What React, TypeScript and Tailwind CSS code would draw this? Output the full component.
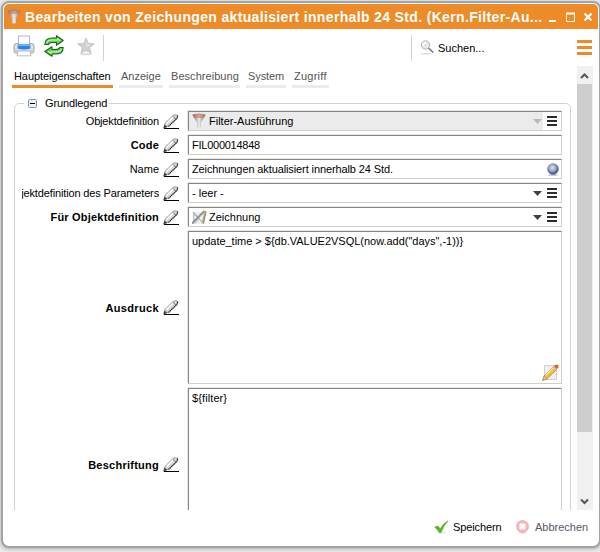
import type { ReactNode } from "react";

const Funnel = ({ className = "" }: { className?: string }) => (
  <svg width="14" height="16" viewBox="0 0 14 16" className={`shrink-0 ${className}`}>
    <defs>
      <linearGradient id="fn">
        <stop offset="0" stopColor="#666" />
        <stop offset=".5" stopColor="#ecece9" />
        <stop offset="1" stopColor="#6c6c6c" />
      </linearGradient>
    </defs>
    <path d="M.5 2L5 9.500V14q2 1 4 0V9.500L13.500 2z" fill="url(#fn)" />
    <path d="M.5 1.500h13L12.300 4.500Q7 5.500 1.700 4.500z" fill="#c9775a" fillOpacity=".6" />
    <path d="M.8 1.800Q7 .2 13.200 1.800" fill="none" stroke="#a48478" strokeWidth="1" />
  </svg>
);

const Pencil = () => (
  <svg width="16" height="16" viewBox="0 0 16 16" className="shrink-0">
    <path d="M1 14.500H16" stroke="#000" />
    <path d="M.8 13.500L2.200 9L10 1.500Q12 0 14.200 1Q15 2.500 13.500 4.500L5.500 12z" fill="#d8d8d8" stroke="#888" strokeWidth=".7" />
    <path d="M14.500 1.500Q14.800 3.500 13.500 5L5.500 12.500" fill="none" stroke="#111" strokeWidth="1.100" strokeDasharray="1.400 .5" />
    <path d="M10 2.500l3.500 3" stroke="#777" strokeWidth="1" />
    <path d="M3.500 9.800l6.500-6.500" stroke="#fff" strokeWidth="1.300" />
    <path d="M.3 14.500l1.200-4 3 2.500z" fill="#444" />
  </svg>
);

const Printer = () => (
  <svg width="22" height="22" viewBox="0 0 22 22" className="shrink-0">
    <path d="M5.500 10V1h11v9z" fill="#fafbfe" stroke="#b4b6c6" />
    <path d="M1 11Q1 8.500 3.500 8.500H5V11h12V8.500h1.500Q21 8.500 21 11v5.500Q21 18 19.500 18h-17Q1 18 1 16.500z" fill="#dfe1ea" stroke="#8b8da0" strokeWidth=".8" />
    <path d="M5.300 9.500h11.400l1 4Q11 15.500 4.300 13.500z" fill="#2b84e0" />
    <path d="M5.300 9.500h11.400l.4 1.500H4.900z" fill="#65b6f6" />
    <path d="M1.500 14.500q9.500 2 19 0V17q0 1-1 1h-17q-1 0-1-1z" fill="#c8cad6" />
    <path d="M5 16h12l1 4.800H4z" fill="#fff" stroke="#a9abb9" strokeWidth=".8" />
  </svg>
);

const Refresh = () => (
  <svg width="20" height="22" viewBox="0 0 20 22" className="shrink-0">
    <g fill="#63d654" stroke="#17601d" strokeWidth="1.100" strokeLinejoin="round">
      <path d="M.8 9.500Q1 3 8 3h4.500V.8L19.200 5.500 12.500 10.200V7.500H8.500Q5 7.500 4.200 9.500z" />
      <path d="M19.200 12.500Q19 19 12 19H8v2.200L.8 16.500 8 11.800v2.700h3.500q3.500 0 4.300-2z" />
    </g>
    <path d="M2.800 7.800Q3.800 5 8 5h5.500V3.800L16.500 5.700M17.200 14.200Q16.200 17 12 17H7v1.200L4 16.300" stroke="#bff7ae" strokeWidth="1.100" fill="none" />
  </svg>
);

const Star = () => (
  <svg width="18" height="19" viewBox="0 0 18 19" className="shrink-0">
    <ellipse cx="9" cy="17.300" rx="6" ry="1" fill="#ddd" />
    <path d="M9 1l2.300 5.400 6 .4-4.600 3.900 1.500 5.900L9 13.500l-5.200 3.100 1.500-5.900L.7 6.800l6-.4z" fill="#d0d0d0" stroke="#bababa" strokeWidth=".7" />
    <path d="M9 3l1.500 4 4 .5-3.500 2.700L9 9z" fill="#dedede" />
  </svg>
);

const Magnifier = () => (
  <svg width="14" height="15" viewBox="0 0 14 15" className="shrink-0">
    <ellipse cx="6.500" cy="13.700" rx="6" ry=".7" fill="#d8d8d8" />
    <path d="M8.500 8l4.800 4.500" stroke="#777" strokeWidth="1.600" />
    <circle cx="5.500" cy="5" r="4.200" fill="#e4e6e7" stroke="#b3b3b3" />
    <path d="M3 5.500Q3 3 6 2.500" stroke="#fff" strokeWidth="1.300" fill="none" />
  </svg>
);

const Drawing = () => (
  <svg width="15" height="15" viewBox="0 0 15 15" className="shrink-0">
    <path d="M.5 2h13v12H.5z" fill="#eceef0" />
    <path d="M1 1.500l7 7-5 5H1z" fill="#c4c8cb" />
    <path d="M1 2l10 11" stroke="#8e9296" strokeWidth=".8" />
    <path d="M2.500 5.500v4l2-2z" fill="#fff" />
    <path d="M0 13.500L12.500 1" stroke="#8f969c" strokeWidth="2" />
    <path d="M13.300 1L10.500 13.500" stroke="#d0a566" strokeWidth="1.600" />
    <path d="M14.300 1L11.500 13.500" stroke="#555a68" strokeWidth=".6" />
  </svg>
);

const Globe = () => (
  <svg width="12" height="13" viewBox="0 0 12 13" className="shrink-0">
    <defs>
      <radialGradient id="gl" cx=".45" cy=".4">
        <stop offset="0" stopColor="#dbe3f2" />
        <stop offset=".6" stopColor="#96a6c8" />
        <stop offset="1" stopColor="#4b5d8b" />
      </radialGradient>
    </defs>
    <ellipse cx="6" cy="11.900" rx="5" ry="1" fill="#ccc" />
    <circle cx="6" cy="6" r="5.700" fill="url(#gl)" />
  </svg>
);

const EditNote = () => (
  <svg width="17" height="17" viewBox="0 0 17 17" className="shrink-0">
    <path d="M2.500 1.500h12v14h-12z" fill="#eff0f1" stroke="#cfd1d3" />
    <path d="M.8 16.300l1.400-4.300L12 2.200l2.800 2.800L5 14.800z" fill="#f3c13e" stroke="#a9762a" strokeWidth=".8" />
    <path d="M3.500 11.500l8-8" stroke="#ffe48b" strokeWidth="1.200" />
    <path d="M.6 16.400l1.600-4.400 2.800 2.800z" fill="#ead0a2" stroke="#987148" strokeWidth=".5" />
    <path d="M11 3.200l2.800 2.800 1-1L12 2.200z" fill="#c9c9cc" />
    <path d="M12 2.200L13.500.7h2q1 0 1 1v1.800L14.800 5z" fill="#e5602b" />
  </svg>
);

const Lines = () => (
  <svg width="10" height="10" className="shrink-0">
    <path d="M0 1h10M0 5h10M0 9h10" stroke="#2b2b30" strokeWidth="2" />
  </svg>
);

const Arrow = ({ color }: { color: string }) => (
  <svg width="9" height="5" className="shrink-0">
    <path d="M0 0h9L4.500 5z" fill={color} />
  </svg>
);

function Label({ children, className = "" }: { children: ReactNode; className?: string }) {
  return (
    <div className="flex h-5 w-[165px] shrink-0 items-center">
      <div className="-ml-px flex h-4 w-[137px] items-center justify-end overflow-hidden whitespace-nowrap">
        <span className={className}>{children}</span>
      </div>
      <div className="ml-1 pt-px"><Pencil /></div>
    </div>
  );
}

const box = "w-[374px] border border-t-[#858585] border-l-[#858585] border-r-[#d2cec8] border-b-[#d2cec8] shadow-[-1px_-1px_0_#e6e6e6]";

function Row({ label, bold, tracking = "", children, menu, disabled }: {
  label: string; bold?: boolean; tracking?: string; children: ReactNode; menu?: boolean; disabled?: boolean;
}) {
  return (
    <div className="flex h-5">
      <Label className={`${bold ? "font-bold" : ""} ${tracking}`}>{label}</Label>
      <div className={`${box} flex items-center whitespace-nowrap`}>
        <div className={`flex h-full grow items-center pl-[3px] ${disabled ? "bg-[#ebebeb]" : ""}`}>
          {children}
          {menu && <div className="mr-px ml-auto"><Arrow color={disabled ? "#b9b9b9" : "#404040"} /></div>}
        </div>
        {menu && <div className="flex w-[18px] items-center pl-1"><Lines /></div>}
      </div>
    </div>
  );
}

const tabs = [
  { name: "Haupteigenschaften", cls: "w-[101px] border-[#ec8b27] text-black tracking-[-0.07px]" },
  { name: "Anzeige", cls: "w-11 border-[#ebebeb] text-[#555]" },
  { name: "Beschreibung", cls: "w-[71px] border-[#ebebeb] text-[#555] tracking-[0.05px]" },
  { name: "System", cls: "w-10 border-[#ebebeb] text-[#555] tracking-[-0.1px]" },
  { name: "Zugriff", cls: "w-[37px] border-[#ebebeb] text-[#555] tracking-[0.25px]" },
];

export default function App() {
  return (
    <div className="h-[552px] w-[600px] overflow-hidden bg-[#ececec] pt-px pl-px font-['Liberation_Sans',Arial,sans-serif] text-[11px] leading-4 text-black">
      <div className="flex h-[547px] w-[600px] flex-col overflow-hidden rounded-[8px] border-2 border-[#a3a3a3] bg-white p-px shadow-[0_1px_4px_#aaa]">
        <div className="flex h-[25px] shrink-0 items-center rounded-t-[5px] bg-[#ec8b27] pl-[3px] text-white">
          <Funnel />
          <span className="ml-1 w-[520px] whitespace-nowrap text-[14px] font-bold tracking-[0.345px]">
            Bearbeiten von Zeichungen aktualisiert innerhalb 24 Std. (Kern.Filter-Au...
          </span>
          <svg width="46" height="12" className="mt-px ml-[3px] shrink-0" fill="none" stroke="#fff">
            <path d="M1 10h7" strokeWidth="2" />
            <path d="M18.500 2v8.500h8V2" />
            <path d="M18 2.500h9" strokeWidth="2" />
            <path d="M36.500 2.500l7 7M43.500 2.500l-7 7" strokeWidth="2.200" />
          </svg>
        </div>

        <div className="flex h-[37px] shrink-0 items-center pl-[9px]">
          <div className="-mt-[3px]"><Printer /></div>
          <div className="-mt-[3px] ml-[9px]"><Refresh /></div>
          <div className="-mt-0.5 ml-[13px]"><Star /></div>
          <div className="ml-2 h-[26px] w-px bg-[#d0d0d0]" />
          <div className="ml-[307px] h-[26px] w-px bg-[#d0d0d0]" />
          <div className="ml-2"><Magnifier /></div>
          <span className="ml-1 w-[139px]">Suchen...</span>
          <svg width="15" height="16" className="shrink-0">
            <path d="M0 1.500h15M0 7.500h15M0 13.500h15" stroke="#ec8b27" strokeWidth="3" />
          </svg>
        </div>

        <div className="flex h-[444px] shrink-0 overflow-hidden">
          <div className="w-[573px] shrink-0 overflow-hidden">
            <div className="flex gap-1.5 pt-[3px] pl-2">
              {tabs.map((t) => (
                <div key={t.name} className={`h-[19px] border-b-[3px] pl-0.5 leading-[15px] whitespace-nowrap ${t.cls}`}>{t.name}</div>
              ))}
            </div>
            <div className="relative mt-[15px] ml-2.5 h-[440px] w-[557px] rounded-[5px] border border-[#d2d2d2]">
              <div className="absolute -top-[9px] left-[9px] flex h-4 items-center bg-white px-1">
                <svg width="9" height="9">
                  <rect x=".5" y=".5" width="8" height="8" rx="1" fill="#f1f1f0" stroke="#7895ae" />
                  <path d="M2 4.500h5" stroke="#000" />
                </svg>
                <span className="-mr-0.5 ml-2 tracking-[-0.12px]">Grundlegend</span>
              </div>
              <div className="flex flex-col gap-1 pt-[7px] pl-2">
                <Row label="Objektdefinition" tracking="tracking-[-0.16px]" menu disabled>
                  <Funnel /><span className="ml-[3px]">Filter-Ausführung</span>
                </Row>
                <Row label="Code" bold tracking="tracking-[0.2px]"><span className="tracking-[-0.25px]">FIL000014848</span></Row>
                <Row label="Name">
                  <span className="tracking-[-0.11px]">Zeichnungen aktualisiert innerhalb 24 Std.</span>
                  <div className="mr-0.5 ml-auto"><Globe /></div>
                </Row>
                <Row label="Objektdefinition des Parameters" tracking="tracking-[-0.14px]" menu>- leer -</Row>
                <Row label="Für Objektdefinition" bold tracking="tracking-[0.2px]" menu>
                  <Drawing /><span className="ml-0.5">Zeichnung</span>
                </Row>
                <div className="flex h-[153px] items-center">
                  <Label className="font-bold tracking-[0.35px]">Ausdruck</Label>
                  <div className={`${box} flex h-full flex-col justify-between pl-[3px]`}>
                    <span className="pt-px tracking-[-0.02px]">{'update_time > ${db.VALUE2VSQL(now.add("days",-1))}'}</span>
                    <div className="mr-0.5 mb-0.5 self-end"><EditNote /></div>
                  </div>
                </div>
                <div className="flex h-[153px] items-center">
                  <Label className="font-bold tracking-[0.25px]">Beschriftung</Label>
                  <div className={`${box} h-full pt-px pl-[3px] tracking-[0.1px]`}>{"${filter}"}</div>
                </div>
              </div>
            </div>
          </div>
          <div className="flex w-4 flex-col bg-[#f0f0f0] pt-px">
            <svg width="16" height="17" className="shrink-0" fill="none" stroke="#555" strokeWidth="2"><path d="M4 11l3.500-3.500L11 11" /></svg>
            <div className="h-[348px] w-[15px] shrink-0 bg-[#cdcdcd]" />
            <svg width="16" height="17" className="mt-auto shrink-0" fill="none" stroke="#555" strokeWidth="2"><path d="M4 6.500l3.500 3.500L11 6.500" /></svg>
          </div>
        </div>

        <div className="flex h-[34px] shrink-0 items-center pl-[430px]">
          <svg width="15" height="14" className="shrink-0">
            <ellipse cx="7" cy="12.700" rx="5" ry=".8" fill="#ddd" />
            <path d="M.8 7L4 6l2.200 2.800Q9 3.500 14 .8 9.500 6 7 12.500H5.500z" fill="#5cb81f" stroke="#429c19" strokeWidth=".5" />
          </svg>
          <span className="ml-1 w-[63px] tracking-[-0.1px]">Speichern</span>
          <svg width="13" height="14" className="shrink-0">
            <ellipse cx="6.500" cy="13" rx="5" ry=".8" fill="#e4e4e4" />
            <circle cx="6.500" cy="6.500" r="6" fill="#f3b5b8" stroke="#e89ca2" strokeWidth=".6" />
            <circle cx="6.500" cy="6.500" r="3.800" fill="#f9d6d8" />
            <path d="M4 4l5 5M9 4L4 9" stroke="#fff" strokeWidth="2" />
          </svg>
          <span className="ml-1.5 text-[#555966]">Abbrechen</span>
        </div>
      </div>
    </div>
  );
}
